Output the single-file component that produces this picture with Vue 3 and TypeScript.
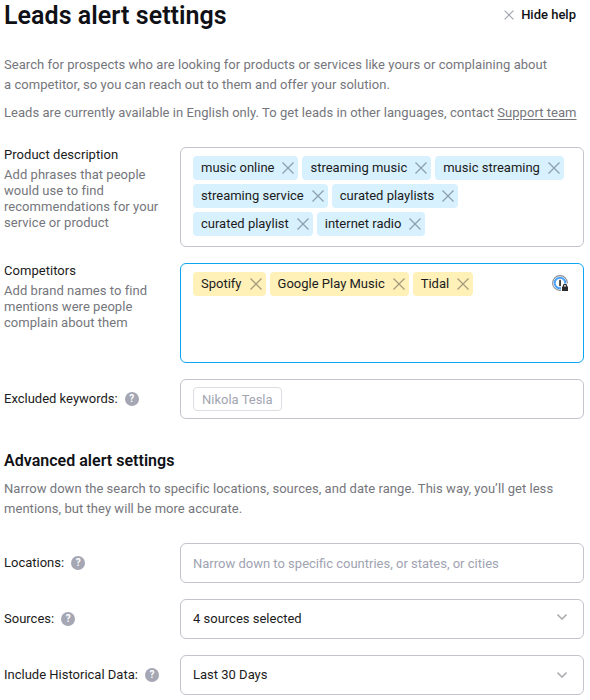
<script setup lang="ts">
import { ref } from 'vue'

const phrases = ref<string[]>([
  'music online',
  'streaming music',
  'music streaming',
  'streaming service',
  'curated playlists',
  'curated playlist',
  'internet radio',
])
const competitors = ref<string[]>(['Spotify', 'Google Play Music', 'Tidal'])

interface SelectRow {
  label: string
  value: string
}
const selects: SelectRow[] = [
  { label: 'Sources:', value: '4 sources selected' },
  { label: 'Include Historical Data:', value: 'Last 30 Days' },
]

function remove(list: string[], item: string): void {
  const index = list.indexOf(item)
  if (index >= 0) list.splice(index, 1)
}
</script>

<template>
  <main class="settings">
    <header class="head">
      <h1 class="title">Leads alert settings</h1>
      <button class="hide" type="button">
        <svg class="hide-icon" viewBox="0 0 10 10"><path d="M.6.6l8.8 8.8M9.4.6L.6 9.4" /></svg>
        <span>Hide help</span>
      </button>
    </header>

    <p class="intro">
      Search for prospects who are looking for products or services like yours or complaining about<br />
      a competitor, so you can reach out to them and offer your solution.
    </p>
    <p class="intro note">
      Leads are currently available in English only. To get leads in other languages, contact
      <a class="link">Support team</a>
    </p>

    <section class="rows first">
      <div class="row">
        <div class="info">
          <div class="label">Product description</div>
          <div class="hint">Add phrases that people<br />would use to find<br />recommendations for your<br />service or product</div>
        </div>
        <div class="box tall">
          <span v-for="item in phrases" :key="item" class="chip">
            <span>{{ item }}</span>
            <svg class="close" viewBox="0 0 12 12" @click="remove(phrases, item)"><path d="M.5.5l11 11M11.5.5l-11 11" /></svg>
          </span>
        </div>
      </div>

      <div class="row">
        <div class="info">
          <div class="label">Competitors</div>
          <div class="hint">Add brand names to find<br />mentions were people<br />complain about them</div>
        </div>
        <div class="box tall focused">
          <span v-for="item in competitors" :key="item" class="chip yellow">
            <span>{{ item }}</span>
            <svg class="close" viewBox="0 0 12 12" @click="remove(competitors, item)"><path d="M.5.5l11 11M11.5.5l-11 11" /></svg>
          </span>
          <svg class="vault" viewBox="0 0 17 17">
            <circle cx="8" cy="8" r="7.4" fill="#fff" stroke="#8b8d90" stroke-width="1.1" />
            <circle cx="8" cy="8" r="5.3" fill="#fff" stroke="#4ba3fa" stroke-width="2" />
            <rect x="7.1" y="4.8" width="1.9" height="6.4" rx=".4" fill="#444" />
            <path d="M9 17V10.8L10.4 8.4H17V17z" fill="#fff" />
            <path d="M11.4 12v-1.1a1.6 1.6 0 0 1 3.2 0V12" fill="none" stroke="#2b2b2e" stroke-width="1.2" />
            <rect x="10" y="11.4" width="6" height="4.6" rx=".5" fill="#2b2b2e" />
          </svg>
        </div>
      </div>

      <div class="row single">
        <div class="info inline">
          <span class="label">Excluded keywords:</span><span class="help">?</span>
        </div>
        <div class="box"><span class="ghost">Nikola Tesla</span></div>
      </div>
    </section>

    <h2 class="subtitle">Advanced alert settings</h2>
    <p class="intro sub">
      Narrow down the search to specific locations, sources, and date range. This way, you’ll get less<br />
      mentions, but they will be more accurate.
    </p>

    <section class="rows second">
      <div class="row single">
        <div class="info inline"><span class="label">Locations:</span><span class="help">?</span></div>
        <div class="box"><span class="placeholder">Narrow down to specific countries, or states, or cities</span></div>
      </div>
      <div v-for="row in selects" :key="row.label" class="row single">
        <div class="info inline"><span class="label">{{ row.label }}</span><span class="help">?</span></div>
        <div class="box select">
          <span>{{ row.value }}</span>
          <svg class="chevron" viewBox="0 0 10 6"><path d="M.5.6L5 5.1 9.5.6" /></svg>
        </div>
      </div>
    </section>
  </main>
</template>

<style>
body {
  margin: 0;
  background: #fff;
}
</style>

<style scoped>
.settings {
  box-sizing: border-box;
  width: 590px;
  height: 700px;
  overflow: hidden;
  padding: 0 6px 0 4px;
  font-family: Roboto, 'Liberation Sans', sans-serif;
  font-size: 13px;
  line-height: 20px;
  letter-spacing: 0.045px;
  color: #1b1b20;
}
.head {
  display: flex;
  justify-content: space-between;
  height: 32px;
  padding-right: 8px;
}
.title {
  margin: 0;
  font-size: 25px;
  line-height: 31px;
  font-weight: 600;
  letter-spacing: 0.05px;
  color: #101116;
}
.hide {
  display: flex;
  align-items: center;
  gap: 7px;
  height: 30px;
  padding: 0;
  border: 0;
  background: none;
  font: inherit;
  font-weight: 500;
  letter-spacing: 0;
  color: #101116;
}
.hide-icon {
  width: 10px;
  height: 10px;
  fill: none;
  stroke: #a0a2af;
  stroke-width: 1.1;
}
.intro {
  margin: 23px 0 0;
  color: #75767c;
  white-space: nowrap;
}
.note {
  margin-top: 8px;
}
.link {
  text-decoration: underline;
  text-underline-offset: 2px;
}
.rows {
  display: grid;
  gap: 16px;
}
.first {
  margin-top: 24px;
}
.row {
  display: grid;
  grid-template-columns: 176px 404px;
}
.label {
  line-height: 16px;
}
.hint {
  margin-top: 4px;
  line-height: 16px;
  color: #75767c;
  white-space: nowrap;
}
.inline {
  display: flex;
  align-items: center;
  gap: 7px;
  letter-spacing: 0;
  white-space: nowrap;
}
.help {
  box-sizing: border-box;
  width: 14px;
  height: 14px;
  border-radius: 50%;
  background: #a5a7b4;
  color: #fff;
  font-size: 10px;
  line-height: 14px;
  font-weight: 700;
  text-align: center;
}
.box {
  position: relative;
  box-sizing: border-box;
  display: flex;
  align-items: center;
  height: 40px;
  padding: 0 12px;
  border: 1px solid #c3c4cc;
  border-radius: 6px;
  letter-spacing: 0;
}
.tall {
  flex-wrap: wrap;
  align-content: flex-start;
  gap: 4px;
  height: 100px;
  padding: 8px 12px;
}
.focused {
  border-color: #0ea5f5;
}
.chip {
  box-sizing: border-box;
  display: flex;
  align-items: center;
  gap: 8px;
  height: 24px;
  padding: 0 4px 0 8px;
  border-radius: 4px;
  background: #d8f1ff;
  white-space: nowrap;
}
.yellow {
  background: #fff1b8;
}
.close {
  width: 12px;
  height: 12px;
  fill: none;
  stroke: #8da0ae;
  stroke-width: 1.3;
}
.yellow .close {
  stroke: #a59d7d;
}
.vault {
  position: absolute;
  top: 11px;
  right: 14px;
  width: 17px;
  height: 17px;
}
.ghost {
  box-sizing: border-box;
  height: 24px;
  padding: 0 8px;
  border: 1px solid #dddee3;
  border-radius: 4px;
  line-height: 23px;
  color: #a3a5b2;
}
.placeholder {
  padding-top: 2px;
  color: #a0a3b1;
}
.select {
  justify-content: space-between;
  padding-right: 16px;
}
.chevron {
  width: 10px;
  height: 6px;
  margin-bottom: 4px;
  fill: none;
  stroke: #adadb1;
  stroke-width: 1.5;
}
.row:last-child .chevron {
  margin-bottom: 0;
}
.subtitle {
  margin: 32px 0 0;
  font-size: 16px;
  line-height: 20px;
  font-weight: 600;
  letter-spacing: 0.02px;
  color: #101116;
}
.sub {
  margin-top: 8px;
}
.second {
  margin-top: 24px;
}
</style>
